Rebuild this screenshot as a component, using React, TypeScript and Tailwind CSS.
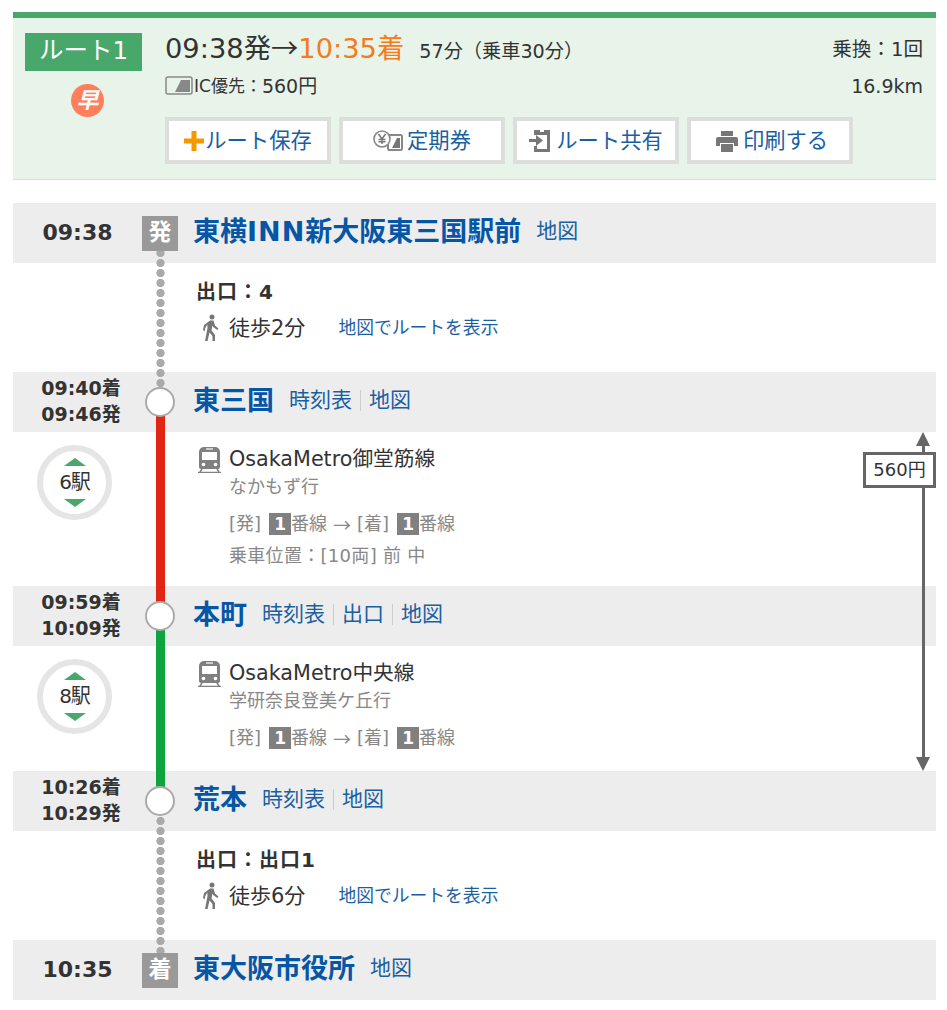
import type { ReactNode } from "react";

const font = "font-['DejaVu_Sans','Noto_Sans_CJK_JP',sans-serif]";
const cjk = "font-['Noto_Sans_CJK_JP',sans-serif]";

function Button({ icon, label }: { icon: ReactNode; label: string }) {
  return (
    <div className="flex h-[47px] w-[166px] items-center justify-center border-4 border-[#dcdedc] bg-white text-[21.3px] text-[#1b5fa3]">
      {icon}
      <span>{label}</span>
    </div>
  );
}

function PlusIcon() {
  return (
    <svg width="20" height="20" viewBox="0 0 20 20" className="mr-px">
      <path d="M7.500 0h5v7.500H20v5h-7.500V20h-5v-7.500H0v-5h7.500z" fill="#f39800" />
    </svg>
  );
}

function TeikiIcon() {
  return (
    <svg width="30" height="22" viewBox="0 0 30 22" className="mr-1">
      <rect x="15" y="5" width="14" height="15" rx="1.500" fill="#fff" stroke="#888" strokeWidth="2" />
      <path d="M19 18l5-10h3v10z" fill="#777" />
      <circle cx="9" cy="9" r="8" fill="#fff" stroke="#888" strokeWidth="1.600" />
      <path d="M5.500 4l3.500 5 3.500-5M9 9v5M5.500 9.500h7M5.500 11.800h7" fill="none" stroke="#777" strokeWidth="1.500" />
    </svg>
  );
}

function ShareIcon() {
  return (
    <svg width="22" height="25" viewBox="0 0 22 25" className="mr-[5px]">
      <path d="M5 7V2h6v2h4V2h6v22H5v-6h3v3h10V7z" fill="#777" />
      <path d="M0 11h7V7l7 5.500-7 5.500v-4H0z" fill="#777" />
    </svg>
  );
}

function PrintIcon() {
  return (
    <svg width="22" height="22" viewBox="0 0 22 22" className="mr-[5px] ml-[4px]">
      <path d="M5 1h12v5H5z" fill="#777" />
      <path d="M2 7h18a2 2 0 0 1 2 2v7h-4v-3H4v3H0V9a2 2 0 0 1 2-2z" fill="#777" />
      <path d="M5 14h12v8H5z" fill="#777" />
    </svg>
  );
}

function TrainIcon() {
  return (
    <svg width="23" height="27" viewBox="0 0 23 27">
      <path d="M6 1h11a5 5 0 0 1 5 5v15a2 2 0 0 1-2 2H3a2 2 0 0 1-2-2V6a5 5 0 0 1 5-5z" fill="#808080" />
      <path d="M8 3h7" stroke="#fff" strokeWidth="1.200" />
      <path d="M4 6h15v8H4z" fill="#fff" />
      <circle cx="5.500" cy="18.500" r="1.800" fill="#fff" />
      <circle cx="17.500" cy="18.500" r="1.800" fill="#fff" />
      <path d="M0 26.500h23" stroke="#808080" strokeWidth="1.500" />
      <path d="M4 23l-2 3M19 23l2 3" stroke="#808080" strokeWidth="1.500" />
    </svg>
  );
}

function WalkIcon() {
  return (
    <svg width="16" height="27" viewBox="0 0 16 27">
      <circle cx="9" cy="3" r="2.500" fill="#777" />
      <path d="M7 6.500h3.500l1.500 5 3.500 3-1.300 1.500-4-3-.7-1.500-1 5 3.500 4.500v6h-2.500v-5l-3-3.500-2 8.500H2l2.500-13-.2-3.500-2 3.500-.7 3.500L0 16l1-5z" fill="#777" />
    </svg>
  );
}

function Circle() {
  return <div className="relative z-10 h-[30px] w-[30px] rounded-full border-2 border-[#aaa] bg-white" />;
}

function Square({ text }: { text: string }) {
  return (
    <div className="relative z-10 flex h-[35px] w-[36px] items-center justify-center bg-[#999] pb-[2px] text-[23px] font-bold text-white">
      {text}
    </div>
  );
}

function Row({
  times,
  marker,
  name,
  links,
}: {
  times: string[];
  marker: ReactNode;
  name: ReactNode;
  links: string[];
}) {
  return (
    <div className="flex h-[60px] items-center bg-[#ededed]">
      <div
        className={`w-[129px] text-center font-bold text-[#333] ${
          times.length === 1 ? "mb-[2px] text-[22px]" : "mb-[3px] pl-[7px] text-[19px] leading-[26px]"
        }`}
      >
        {times.map((t) => (
          <div key={t}>{t}</div>
        ))}
      </div>
      <div className="flex w-[36px] justify-center">{marker}</div>
      <div className="mb-[3px] ml-[15px] text-[27px] leading-none font-bold text-[#0656a6]">{name}</div>
      <div className="mb-[3px] ml-[15px] flex items-center text-[21px] leading-none text-[#1b5fa3]">
        {links.map((l, i) => (
          <span key={l} className={i > 0 ? "ml-2 border-l border-[#ccc] pl-2" : ""}>
            {l}
          </span>
        ))}
      </div>
    </div>
  );
}

function Dots({ className }: { className: string }) {
  return (
    <div
      className={`absolute left-[143px] h-[140px] w-[9px] bg-[radial-gradient(circle,#aaa_3.800px,transparent_4.400px)] bg-[length:9px_10px] ${className}`}
    />
  );
}

function WalkSection({ exit, walk, dots }: { exit: string; walk: string; dots: string }) {
  return (
    <div className="relative flex h-[109px] flex-col pt-[16px] pl-[183px]">
      <Dots className={dots} />
      <div className="text-[20px] leading-[26px] font-bold tracking-[1px] text-[#333]">{exit}</div>
      <div className="mt-[9px] flex items-center pl-[7px] text-[21px] leading-[26px] text-[#333]">
        <WalkIcon />
        <span className="ml-[10px]">{walk}</span>
        <span className="ml-[33px] text-[17.800px] text-[#1b5fa3]">地図でルートを表示</span>
      </div>
    </div>
  );
}

function StopCount({ text }: { text: string }) {
  return (
    <div className="flex h-[75px] w-[75px] flex-col items-center justify-center rounded-full border-[6px] border-[#e5e5e5] bg-white text-[20px] leading-none tracking-[-1px] text-[#333]">
      <div className="mb-[6px] h-0 w-0 border-x-[11px] border-b-[8px] border-x-transparent border-b-[#48a86b]" />
      <div>{text}</div>
      <div className="mt-[7px] h-0 w-0 border-x-[11px] border-t-[8px] border-x-transparent border-t-[#48a86b]" />
    </div>
  );
}

function Badge() {
  return (
    <span className="ml-[8px] flex h-[22px] w-[22px] items-center justify-center bg-[#808080] text-[17px] font-bold text-white">
      1
    </span>
  );
}

function Platform() {
  return (
    <div className="flex items-center">
      <span>[発]</span>
      <Badge />
      <span>番線</span>
      <span className={`mx-[6px] ${cjk}`}>→</span>
      <span>[着]</span>
      <Badge />
      <span>番線</span>
    </div>
  );
}

function TrainSection({
  height,
  count,
  line,
  dest,
  rail,
  children,
}: {
  height: string;
  count: string;
  line: string;
  dest: string;
  rail: ReactNode;
  children?: ReactNode;
}) {
  return (
    <div className={`relative flex ${height}`}>
      {rail}
      <div className="w-[123px] pt-[13px] pl-[24px]">
        <StopCount text={count} />
      </div>
      <div className="ml-[62px] flex pt-[14px]">
        <TrainIcon />
        <div className="ml-[8px] text-[#888]">
          <div className="text-[20.700px] leading-[26px] text-[#333]">{line}</div>
          <div className="mt-[3px] text-[18px] leading-[24px]">{dest}</div>
          <div className="mt-[13px] text-[18px] leading-[24px]">
            <Platform />
            {children}
          </div>
        </div>
      </div>
    </div>
  );
}

export default function App() {
  return (
    <div className={`min-h-[1010px] bg-white pt-[12px] pr-[11px] pl-[13px] ${font}`}>
      <div className="h-[168px] border-t-[6px] border-b border-t-[#48a86b] border-b-[#d8e0da] bg-[#e8f4ea]">
        <div className="flex pt-[15px] pr-[13px] pl-[12px]">
          <div className="flex w-[117px] flex-col items-center">
            <div className="flex h-[38px] w-[117px] items-center justify-center bg-[#48a86b] pb-[2px] text-[24.500px] text-white">
              ルート1
            </div>
            <div className="mt-[13px] ml-[8px] flex h-[33px] w-[33px] items-center justify-center rounded-full bg-[#ff7f5c] text-[22px] font-bold text-white italic">
              早
            </div>
          </div>
          <div className="ml-[23px] flex-1">
            <div className="flex h-[34px] items-center justify-between leading-[32px]">
              <div className="flex items-baseline text-[#333]">
                <span className="text-[27.300px] leading-[32px]">
                  09:38発<span className={`leading-none ${cjk}`}>→</span>
                </span>
                <span className="text-[27.300px] leading-[32px] text-[#f47b20]">10:35着</span>
                <span className="ml-[15px] text-[19.200px] leading-[32px]">57分（乗車30分）</span>
              </div>
              <span className="text-[19.600px] text-[#333]">乗換：1回</span>
            </div>
            <div className="mt-[7px] flex items-center justify-between text-[19px] leading-[24px] text-[#333]">
              <div className="flex items-center">
                <svg width="28" height="20" viewBox="0 0 28 20" className="mr-[1px]">
                  <rect x="1" y="1" width="26" height="17" rx="2" fill="none" stroke="#888" strokeWidth="1.500" />
                  <path d="M10 16l6-12h9v12z" fill="#888" />
                </svg>
                <span className="text-[17px]">IC優先：</span>
                <span>560円</span>
              </div>
              <span>16.9km</span>
            </div>
            <div className="mt-[19px] flex gap-[8px]">
              <Button icon={<PlusIcon />} label="ルート保存" />
              <Button icon={<TeikiIcon />} label="定期券" />
              <Button icon={<ShareIcon />} label="ルート共有" />
              <Button icon={<PrintIcon />} label="印刷する" />
            </div>
          </div>
        </div>
      </div>

      <div className="relative mt-[23px]">
        <Row
          times={["09:38"]}
          marker={<Square text="発" />}
          name={
            <>
              東横<span className="tracking-[1px]">INN</span>新大阪東三国駅前
            </>
          }
          links={["地図"]}
        />
        <WalkSection exit="出口：4" walk="徒歩2分" dots="top-[-15px]" />
        <Row times={["09:40着", "09:46発"]} marker={<Circle />} name="東三国" links={["時刻表", "地図"]} />
        <TrainSection
          height="h-[154px]"
          count="6駅"
          line="OsakaMetro御堂筋線"
          dest="なかもず行"
          rail={<div className="absolute top-[-16px] bottom-[-16px] left-[143px] w-[9px] bg-[#e02515]" />}
        >
          <div className="mt-[8px] tracking-[0.3px]">乗車位置：[10両] 前 中</div>
        </TrainSection>
        <Row times={["09:59着", "10:09発"]} marker={<Circle />} name="本町" links={["時刻表", "出口", "地図"]} />
        <TrainSection
          height="h-[125px]"
          count="8駅"
          line="OsakaMetro中央線"
          dest="学研奈良登美ケ丘行"
          rail={<div className="absolute top-[-16px] bottom-[-16px] left-[143px] w-[9px] bg-[#0ea53e]" />}
        />
        <Row times={["10:26着", "10:29発"]} marker={<Circle />} name="荒本" links={["時刻表", "地図"]} />
        <WalkSection exit="出口：出口1" walk="徒歩6分" dots="top-[-15px]" />
        <Row times={["10:35"]} marker={<Square text="着" />} name="東大阪市役所" links={["地図"]} />

        {/* fare span, sits over the rows */}
        <div className="absolute top-[229px] right-[6px] flex h-[339px] w-[14px] flex-col items-center">
          <div className="h-0 w-0 border-x-[7px] border-b-[14px] border-x-transparent border-b-[#666]" />
          <div className="w-[3px] flex-1 bg-[#666]" />
          <div className="h-0 w-0 border-x-[7px] border-t-[14px] border-x-transparent border-t-[#666]" />
        </div>
        <div className="absolute top-[249px] right-0 flex h-[36px] w-[73px] items-center justify-center border-[3px] border-[#666] bg-white pb-[2px] text-[18px] text-[#333]">
          560円
        </div>
      </div>
    </div>
  );
}
